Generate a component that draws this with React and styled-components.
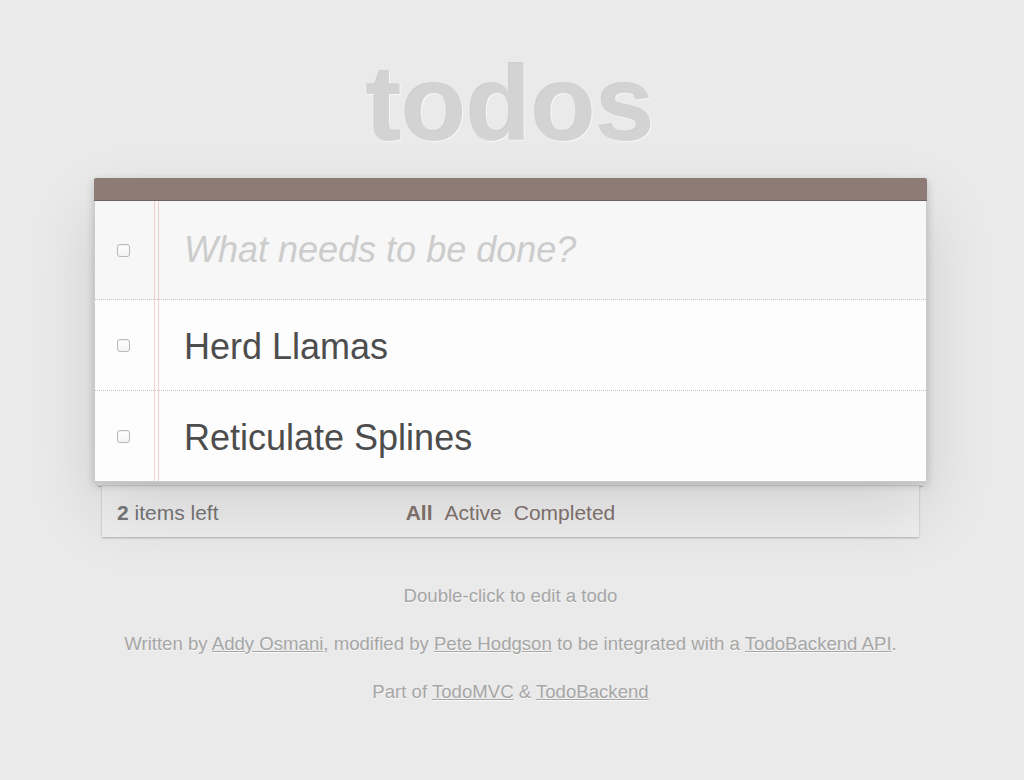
import React from 'react'
import styled, { createGlobalStyle } from 'styled-components'

const GlobalStyle = createGlobalStyle`
  html, body {
    margin: 0;
    padding: 0;
    background: #eaeaea;
  }
  body {
    font-family: "Liberation Sans", Arial, Helvetica, sans-serif;
    font-size: 21px;
    color: #4d4d4d;
  }
`

const todos = [
  { id: 1, title: 'Herd Llamas', completed: false },
  { id: 2, title: 'Reticulate Splines', completed: false },
]

const Page = styled.div`
  width: 1024px;
  min-height: 780px;
  padding-right: 3px;
  box-sizing: border-box;
`

const Column = styled.section`
  width: 833px;
  margin: 0 auto;
`

const Title = styled.h1`
  margin: 0 0 22px;
  padding-top: 51px;
  font-size: 106px;
  line-height: 105px;
  font-weight: bold;
  text-align: center;
  color: #d3d3d3;
  text-shadow: -1px -1px 0 rgba(0, 0, 0, 0.12), 1px 1px 0 rgba(255, 255, 255, 0.6);
`

const AppBox = styled.div`
  position: relative;
  z-index: 1;
  border: 1px solid #ccc;
  border-top: none;
  border-top-left-radius: 2px;
  border-top-right-radius: 2px;
  background:
    linear-gradient(
      to right,
      transparent 59px,
      #f5d3d3 59px,
      #f5d3d3 60px,
      transparent 60px,
      transparent 63px,
      #f5d3d3 63px,
      #f5d3d3 64px,
      transparent 64px
    ),
    #fdfdfd;
  box-shadow: 0 3px 9px 0 rgba(0, 0, 0, 0.2), 0 30px 70px 0 rgba(0, 0, 0, 0.12);
`

const HeaderBar = styled.div`
  height: 22px;
  margin: 0 -1px;
  background: #8d7c75;
  border-bottom: 1px solid #6c615c;
  border-top-left-radius: 2px;
  border-top-right-radius: 2px;
`

const Row = styled.div`
  display: grid;
  grid-template-columns: 89px 1fr;
  align-items: center;
  height: ${p => p.$height}px;
  background: ${p => (p.$input ? 'rgba(0, 0, 0, 0.025)' : 'transparent')};
  border-bottom: ${p => (p.$last ? 'none' : '1px dotted #c4c4c4')};
`

const ToggleCell = styled.div`
  display: flex;
  align-items: center;
  padding-left: 22px;
`

const Toggle = styled.input.attrs({ type: 'checkbox' })`
  appearance: none;
  margin: 0;
  width: 13px;
  height: 13px;
  border: 1px solid #b9b9b9;
  border-radius: 3px;
  background: linear-gradient(#ffffff, #f3f3f3);
  box-shadow: inset 0 1px 1px rgba(0, 0, 0, 0.06);
  box-sizing: border-box;
`

const NewTodo = styled.input`
  border: none;
  outline: none;
  background: transparent;
  padding: 0;
  margin: 0;
  width: 100%;
  font-family: "Liberation Sans", Arial, Helvetica, sans-serif;
  font-size: 36px;
  color: #4d4d4d;
  &::placeholder {
    font-style: italic;
    color: #cccccc;
  }
`

const Label = styled.label`
  font-size: 36px;
  line-height: 43px;
  color: #4d4d4d;
  margin-top: 2px;
`

const FooterWrap = styled.div`
  padding: 0 4px;
`

const Sheet = styled.div`
  height: 3px;
  background: #f4f4f4;
  box-shadow: 0 1px 1px rgba(0, 0, 0, 0.22);
  border-bottom: 1px solid #dcdcdc;
`

const FooterBar = styled.footer`
  display: grid;
  grid-template-columns: 1fr auto 1fr;
  align-items: center;
  height: 51px;
  margin: 0 4px;
  padding: 3px 15px 0;
  background: #efefef;
  color: #777;
  font-size: 21px;
  box-shadow: 0 1px 2px rgba(0, 0, 0, 0.25);
  box-sizing: border-box;
`

const Count = styled.span`
  strong {
    font-weight: bold;
  }
`

const Filters = styled.ul`
  list-style: none;
  margin: 0;
  padding: 0;
  display: flex;
  gap: 12px;
`

const FilterLink = styled.a`
  color: #83756f;
  text-decoration: none;
  font-weight: ${p => (p.$selected ? 'bold' : 'normal')};
`

const Info = styled.div`
  margin-top: 46px;
  color: #a6a6a6;
  font-size: 18.6px;
  text-align: center;
  text-shadow: 0 1px 0 rgba(255, 255, 255, 0.7);
  p {
    margin: 0 0 22px;
    line-height: 26px;
  }
  a {
    color: inherit;
  }
`

export default function App() {
  const left = todos.filter(t => !t.completed).length

  return (
    <Page>
      <GlobalStyle />
      <Column>
        <Title>todos</Title>
        <AppBox>
          <HeaderBar />
          <Row $height={98} $input>
            <ToggleCell>
              <Toggle />
            </ToggleCell>
            <NewTodo placeholder="What needs to be done?" />
          </Row>
          {todos.map((todo, i) => (
            <Row key={todo.id} $height={90} $last={i === todos.length - 1}>
              <ToggleCell>
                <Toggle defaultChecked={todo.completed} />
              </ToggleCell>
              <Label>{todo.title}</Label>
            </Row>
          ))}
        </AppBox>
        <FooterWrap>
          <Sheet />
          <FooterBar>
            <Count>
              <strong>{left}</strong> items left
            </Count>
            <Filters>
              <li><FilterLink href="#/" $selected>All</FilterLink></li>
              <li><FilterLink href="#/active">Active</FilterLink></li>
              <li><FilterLink href="#/completed">Completed</FilterLink></li>
            </Filters>
            <span />
          </FooterBar>
        </FooterWrap>
        <Info>
          <p>Double-click to edit a todo</p>
          <p>
            Written by <a href="#">Addy Osmani</a>, modified by <a href="#">Pete Hodgson</a> to be
            integrated with a <a href="#">TodoBackend API</a>.
          </p>
          <p>
            Part of <a href="#">TodoMVC</a> &amp; <a href="#">TodoBackend</a>
          </p>
        </Info>
      </Column>
    </Page>
  )
}
